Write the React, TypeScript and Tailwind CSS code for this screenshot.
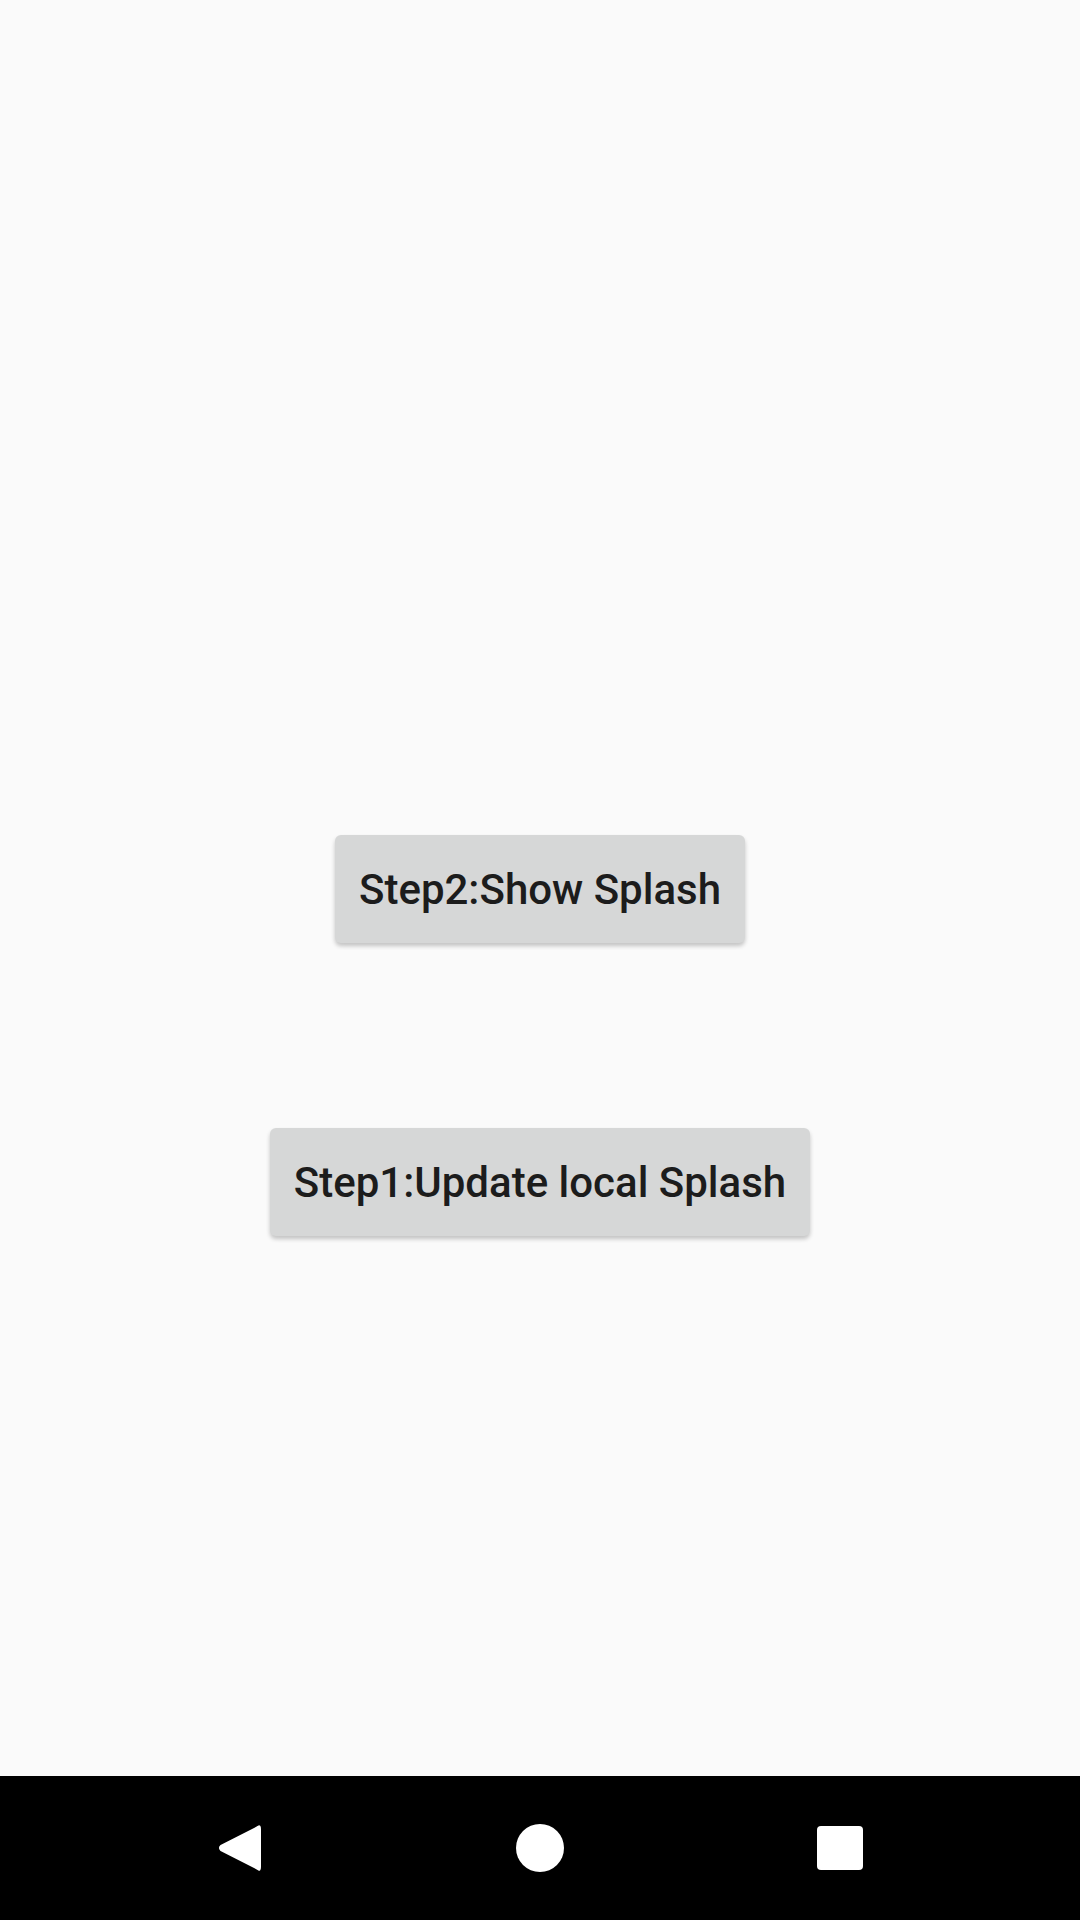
import React from "react";

export default function App() {
  return (
    <div className="w-[1080px] h-[1920px] flex flex-col bg-[#fafafa]" style={{ fontFamily: "Roboto, 'Noto Sans', sans-serif" }}>
      <div className="flex-1 flex flex-col items-center pt-[835px]">
        <button className="h-[108px] px-[24px] rounded-[6px] bg-[#d6d7d7] text-[#1c1c1c] text-[42px] font-medium shadow-[0_3px_4px_rgba(0,0,0,0.22)] flex items-center justify-center">
          Step2:Show Splash
        </button>
        <button className="mt-[185px] h-[108px] px-[24px] rounded-[6px] bg-[#d6d7d7] text-[#1c1c1c] text-[42px] font-medium shadow-[0_3px_4px_rgba(0,0,0,0.22)] flex items-center justify-center">
          Step1:Update local Splash
        </button>
      </div>
      <div className="h-[144px] bg-black flex items-center justify-center">
        <div className="w-[300px] flex justify-center">
          <svg width="44" height="48" viewBox="0 0 44 48">
            <path d="M40 3 Q42 1 42 5 L42 43 Q42 47 40 45 L3 26 Q1 24 3 22 Z" fill="#fff" stroke="#fff" strokeWidth="2" strokeLinejoin="round" />
          </svg>
        </div>
        <div className="w-[300px] flex justify-center">
          <div className="w-[48px] h-[48px] rounded-full bg-white" />
        </div>
        <div className="w-[300px] flex justify-center">
          <div className="w-[46px] h-[44px] rounded-[4px] bg-white" />
        </div>
      </div>
    </div>
  );
}
